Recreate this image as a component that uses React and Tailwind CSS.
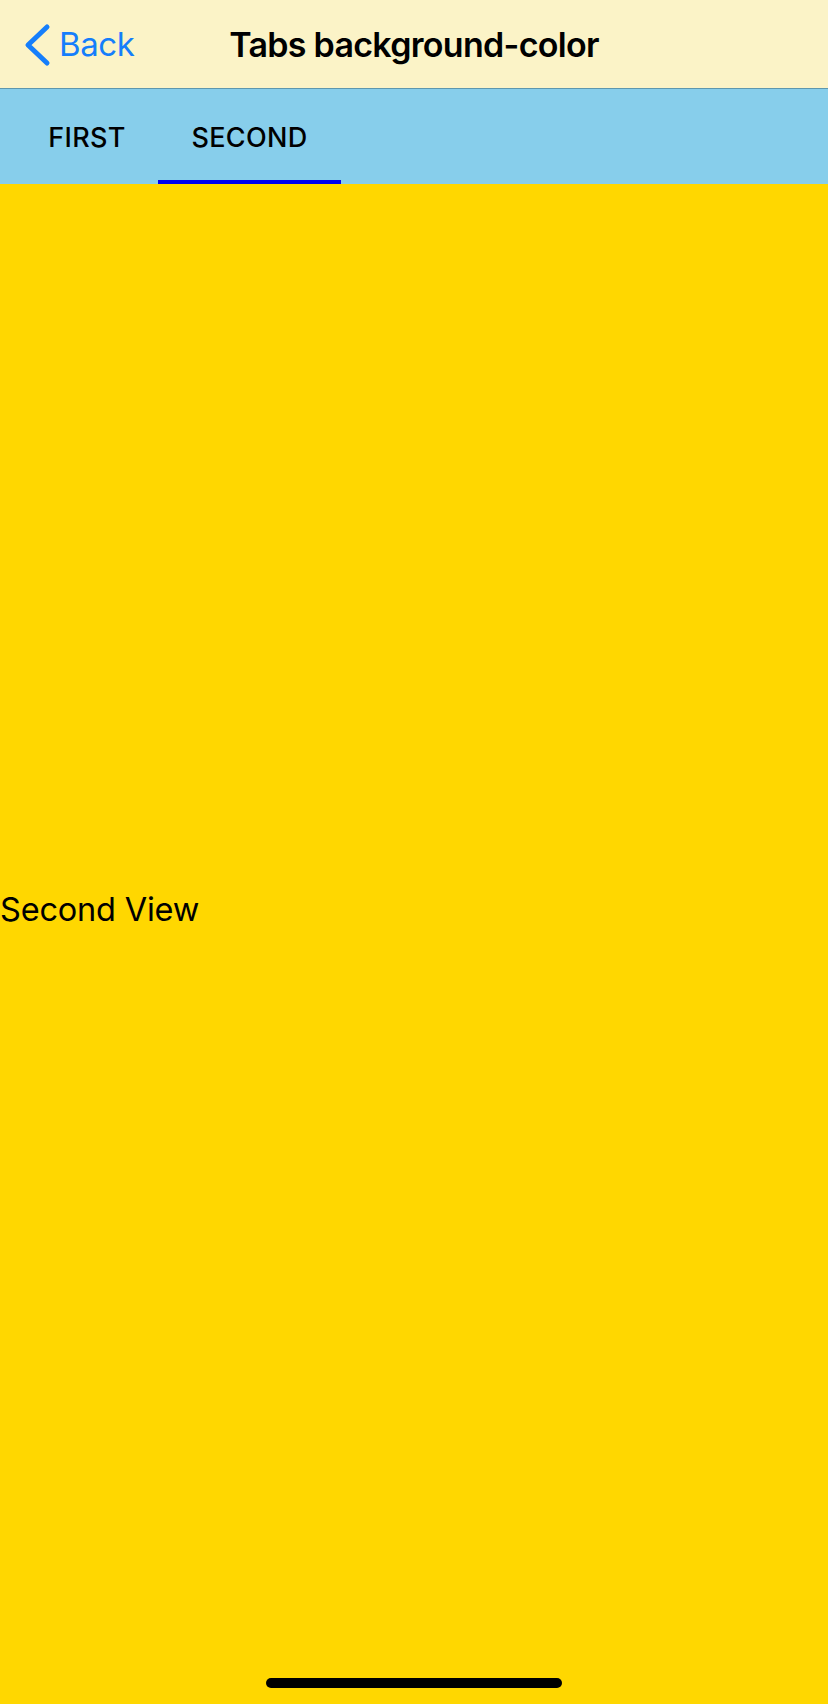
import React, { useState } from 'react';

const tabs = [
  { key: 'first', label: 'FIRST', width: 'w-[142px]' },
  { key: 'second', label: 'SECOND', width: 'w-[183px]' },
];

const App = () => {
  const [active, setActive] = useState('second');

  return (
    <div className="relative w-[828px] h-[1704px] flex flex-col bg-[#ffd700] overflow-hidden font-['Inter',sans-serif] text-black">
      {/* Nav bar */}
      <div className="relative h-[89px] shrink-0 bg-[#fbf3c7] border-b border-[#5e97ae] flex items-center">
        <button className="flex items-center h-full pl-[22px] text-[#157efb]">
          <svg width="32" height="44" viewBox="0 0 32 44" className="mt-[2px]">
            <path d="M25 4 L6 22 L25 40" fill="none" stroke="#157efb" strokeWidth="5" strokeLinecap="round" strokeLinejoin="round" />
          </svg>
          <span className="ml-[5px] text-[33px] leading-none tracking-[-0.4px] mt-[1px]">Back</span>
        </button>
        <div className="absolute inset-x-0 top-0 h-full flex items-center justify-center pointer-events-none">
          <span className="text-[34px] font-semibold leading-none tracking-[-0.7px] mt-[2px]">Tabs background-color</span>
        </div>
      </div>

      {/* Tab bar */}
      <div className="h-[95px] shrink-0 bg-[#87ceeb] flex pl-[16px]">
        {tabs.map((t) => (
          <button
            key={t.key}
            onClick={() => setActive(t.key)}
            className={`${t.width} h-full flex flex-col`}
          >
            <div className="flex-1 flex items-center justify-center text-[27px] font-medium tracking-[0.3px] pt-[7px]">
              {t.label}
            </div>
            <div className={`h-[4px] w-full ${active === t.key ? 'bg-[#0000f0]' : 'bg-transparent'}`} />
          </button>
        ))}
      </div>

      {/* Content */}
      <div className="flex-1 flex items-center pb-[68px]">
        <span className="text-[32.5px] leading-none tracking-[-0.2px]">{active === 'second' ? 'Second View' : 'First View'}</span>
      </div>

      {/* Home indicator */}
      <div className="absolute left-[266px] top-[1678px] w-[296px] h-[10px] rounded-full bg-black" />
    </div>
  );
};

export default App;
